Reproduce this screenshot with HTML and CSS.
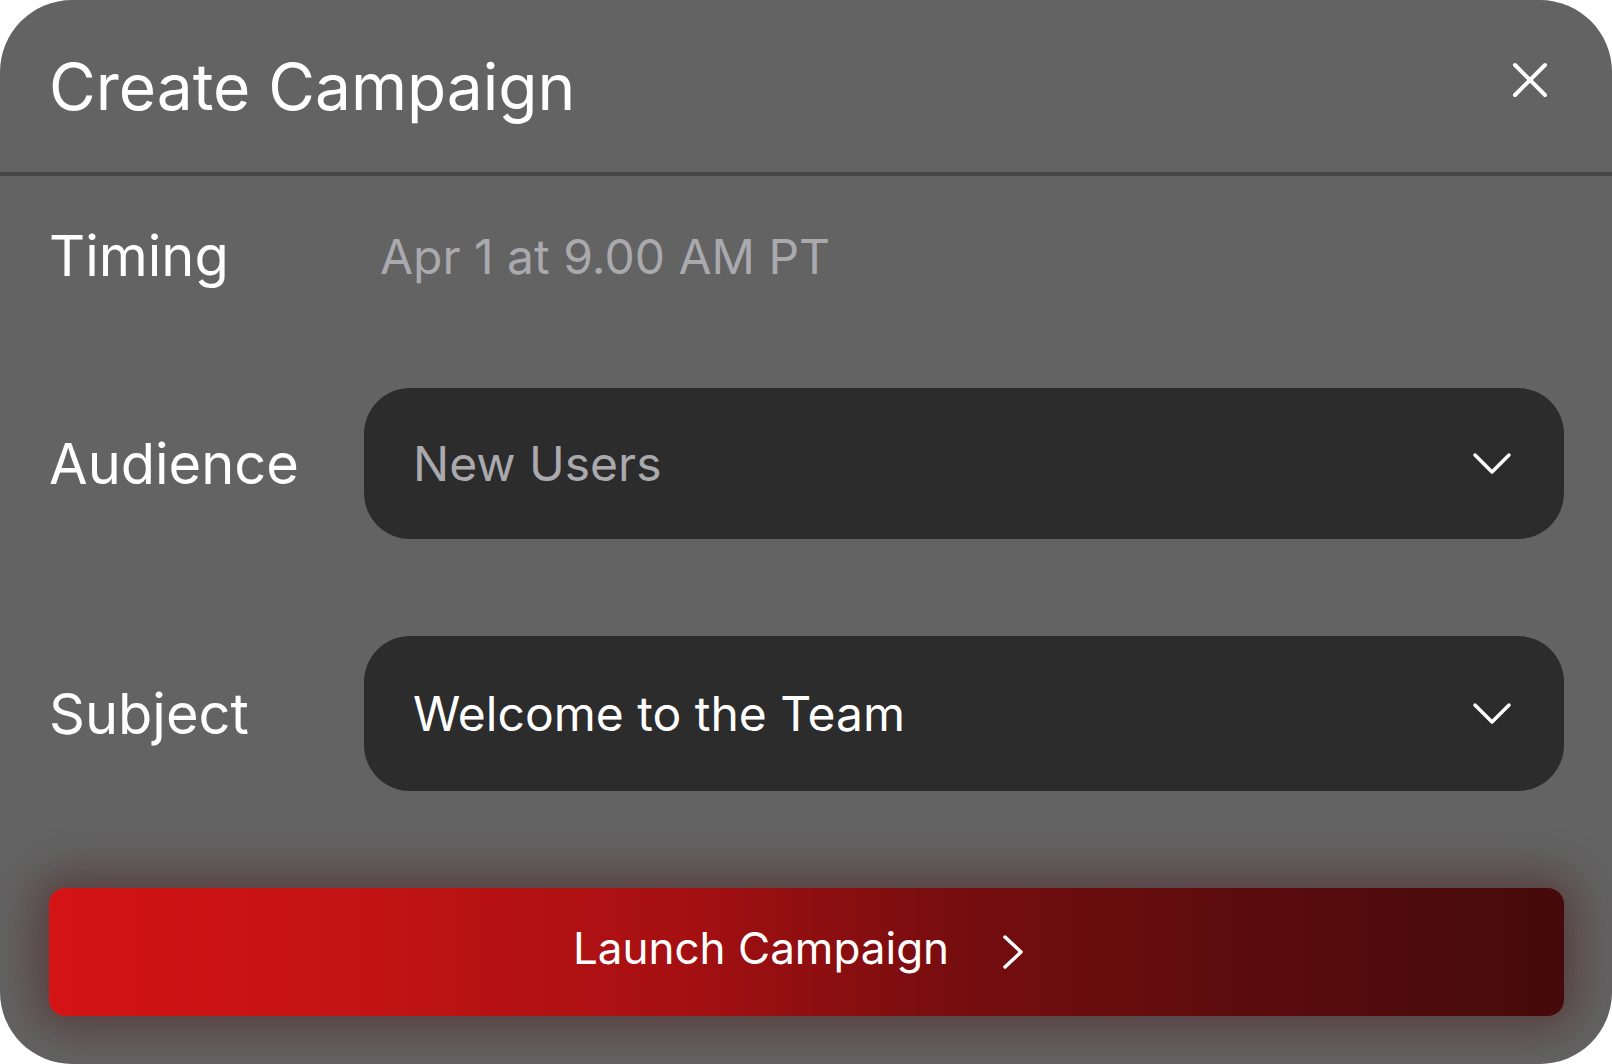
FILE: index.html
```html
<!DOCTYPE html>
<html lang="en">
<head>
<meta charset="utf-8">
<title>Create Campaign</title>
<link rel="stylesheet" href="styles.css">
</head>
<body>
<div class="card">
  <header class="header">
    <h1 class="title">Create Campaign</h1>
    <button class="close" aria-label="Close">
      <svg width="36" height="36" viewBox="0 0 36 36"><path d="M3 3 L33 33 M33 3 L3 33" stroke="#fff" stroke-width="4" stroke-linecap="round" fill="none"/></svg>
    </button>
  </header>
  <div class="body">
    <div class="row row-timing">
      <div class="label">Timing</div>
      <div class="timing-value">Apr 1 at 9.00 AM PT</div>
    </div>
    <div class="row">
      <div class="label">Audience</div>
      <div class="select select-audience">
        <span class="select-text muted">New Users</span>
        <svg class="chev" width="40" height="24" viewBox="0 0 40 24"><path d="M3 3 L20 20 L37 3" stroke="#fff" stroke-width="3.5" stroke-linecap="round" stroke-linejoin="round" fill="none"/></svg>
      </div>
    </div>
    <div class="row">
      <div class="label">Subject</div>
      <div class="select select-subject">
        <span class="select-text">Welcome to the Team</span>
        <svg class="chev" width="40" height="24" viewBox="0 0 40 24"><path d="M3 3 L20 20 L37 3" stroke="#fff" stroke-width="3.5" stroke-linecap="round" stroke-linejoin="round" fill="none"/></svg>
      </div>
    </div>
    <button class="launch">
      <span class="launch-text">Launch Campaign</span>
      <svg width="22" height="36" viewBox="0 0 22 36"><path d="M3 3 L19 18 L3 33" stroke="#fff" stroke-width="3.5" stroke-linecap="round" stroke-linejoin="round" fill="none"/></svg>
    </button>
  </div>
</div>
</body>
</html>
```
FILE: styles.css
```css
html, body {
  margin: 0;
  padding: 0;
  background: #ffffff;
}
body {
  font-family: Inter, "Noto Sans", "Liberation Sans", sans-serif;
  color: #ffffff;
}
.card {
  width: 1612px;
  height: 1064px;
  box-sizing: border-box;
  background: #636363;
  border-radius: 72px;
  overflow: hidden;
  display: flex;
  flex-direction: column;
}
.header {
  height: 172px;
  flex: none;
  border-bottom: 4px solid #464646;
  display: flex;
  align-items: center;
  justify-content: space-between;
  padding: 0 64px 0 49px;
}
.title {
  margin: 0;
  font-size: 64px;
  font-weight: 400;
  line-height: normal;
}
.close {
  background: none;
  border: none;
  padding: 0;
  width: 36px;
  height: 36px;
  margin-bottom: 12px;
  display: flex;
  cursor: pointer;
}
.body {
  display: flex;
  flex-direction: column;
  gap: 97px;
  padding: 45px 48px 48px 49px;
}
.row {
  display: grid;
  grid-template-columns: 315px 1fr;
  align-items: center;
}
.row-timing {
  height: 70px;
}
.label {
  font-size: 56px;
  line-height: normal;
}
.timing-value {
  font-size: 48px;
  color: #a9a9ae;
  padding-left: 16px;
}
.select {
  background: #2c2c2c;
  border-radius: 46px;
  padding: 0 52px 0 49px;
  display: flex;
  align-items: center;
  justify-content: space-between;
}
.select-audience {
  height: 151px;
}
.select-subject {
  height: 155px;
}
.select-text {
  font-size: 48px;
  line-height: normal;
}
.muted {
  color: #a9a9ae;
}
.launch {
  height: 128px;
  border: none;
  border-radius: 16px;
  padding: 0 16px 0 0;
  background: linear-gradient(90deg, #d41315 0%, #c11314 22%, #a51012 42%, #760d0f 60%, #5a0c0d 80%, #450a0b 100%);
  box-shadow: 0 0 44px 12px rgba(78, 34, 34, 0.6);
  display: flex;
  align-items: center;
  justify-content: center;
  gap: 53px;
  color: #ffffff;
  font-family: inherit;
  cursor: pointer;
}
.launch-text {
  font-size: 44px;
  line-height: normal;
  margin-bottom: 9px;
}
```
